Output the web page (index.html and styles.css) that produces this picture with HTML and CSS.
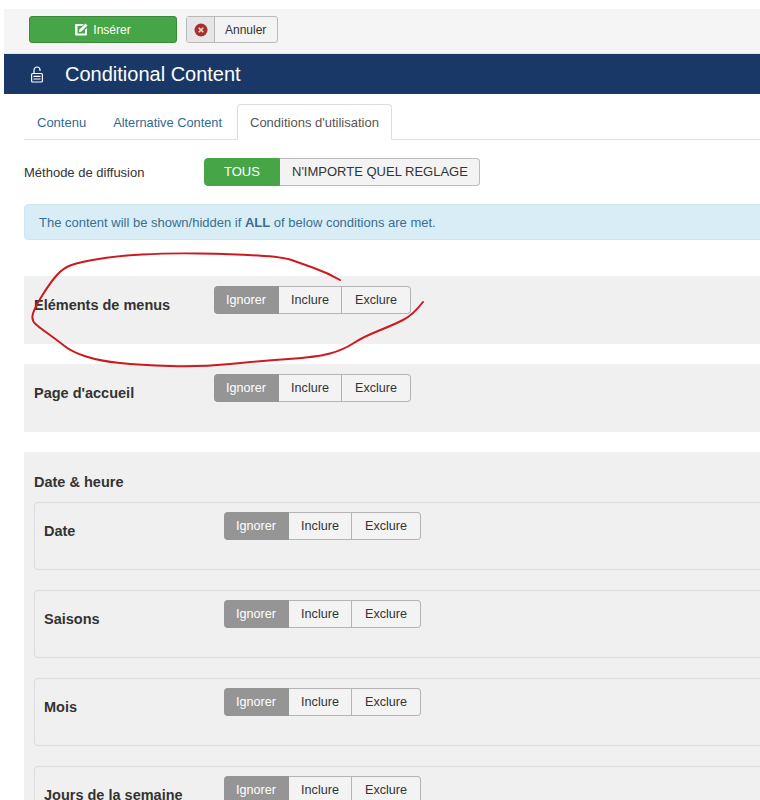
FILE: index.html
```html
<!DOCTYPE html>
<html lang="fr">
<head>
    <meta charset="UTF-8">
    <meta name="viewport" content="width=device-width, initial-scale=1.0">
    <title>Conditional Content</title>
    <link rel="stylesheet" href="styles.css">
</head>
<body>
    <div class="page">
        <div class="toolbar">
            <a href="#" class="btn-insert">
                <svg class="icon-edit" width="13" height="13" viewBox="0 0 13 13">
                    <path d="M1.5 1h7.5l-2 2h-4.500v7.500h7.500v-3.500l2-2v6.200a1.300 1.300 0 0 1-1.300 1.300h-9.400a1.300 1.300 0 0 1-1.300-1.300v-9.400a1.300 1.300 0 0 1 1.500-0.800z" fill="#fff"/>
                    <path d="M10.5 0.5l2 2-6 6-2.700 0.700 0.700-2.700z" fill="#fff"/>
                </svg>
                Insérer
            </a>
            <a href="#" class="btn-cancel">
                <span class="cancel-icon">
                    <svg width="14" height="14" viewBox="0 0 14 14">
                        <circle cx="7" cy="7" r="6.5" fill="#a5312c"/>
                        <path d="M4.7 4.7l4.600 4.600M9.300 4.700l-4.600 4.600" stroke="#f0d4d2" stroke-width="1.6"/>
                    </svg>
                </span>
                <span class="cancel-label">Annuler</span>
            </a>
        </div>

        <header class="title-bar">
            <svg class="icon-lock" width="12" height="17" viewBox="0 0 12 17" fill="none" stroke="#fff" stroke-width="1.2">
                <path d="M3 7.5v-3.500a3 3 0 0 1 6 0v1"/>
                <rect x="0.6" y="7.5" width="10.8" height="8.5" rx="1"/>
                <path d="M2.5 10.3h7M2.500 13h7"/>
            </svg>
            <h1>Conditional Content</h1>
        </header>

        <main class="content">
            <ul class="tabs">
                <li><a href="#">Contenu</a></li>
                <li class="alt"><a href="#">Alternative Content</a></li>
                <li class="active"><a href="#">Conditions d'utilisation</a></li>
            </ul>

            <div class="method-row">
                <label class="method-label">Méthode de diffusion</label>
                <div class="method-group">
                    <span class="method-on">TOUS</span>
                    <span class="method-off">N'IMPORTE QUEL REGLAGE</span>
                </div>
            </div>

            <div class="alert">The content will be shown/hidden if <strong>ALL</strong> of below conditions are met.</div>

            <section class="panel">
                <div class="cond-label">Eléments de menus</div>
                <div class="btn-group">
                    <span class="on">Ignorer</span><span class="inc">Inclure</span><span class="exc">Exclure</span>
                </div>
            </section>

            <section class="panel">
                <div class="cond-label">Page d'accueil</div>
                <div class="btn-group">
                    <span class="on">Ignorer</span><span class="inc">Inclure</span><span class="exc">Exclure</span>
                </div>
            </section>

            <section class="group">
                <h2>Date &amp; heure</h2>

                <div class="sub-panel">
                    <div class="cond-label">Date</div>
                    <div class="btn-group">
                        <span class="on">Ignorer</span><span class="inc">Inclure</span><span class="exc">Exclure</span>
                    </div>
                </div>

                <div class="sub-panel">
                    <div class="cond-label">Saisons</div>
                    <div class="btn-group">
                        <span class="on">Ignorer</span><span class="inc">Inclure</span><span class="exc">Exclure</span>
                    </div>
                </div>

                <div class="sub-panel">
                    <div class="cond-label">Mois</div>
                    <div class="btn-group">
                        <span class="on">Ignorer</span><span class="inc">Inclure</span><span class="exc">Exclure</span>
                    </div>
                </div>

                <div class="sub-panel">
                    <div class="cond-label">Jours de la semaine</div>
                    <div class="btn-group">
                        <span class="on">Ignorer</span><span class="inc">Inclure</span><span class="exc">Exclure</span>
                    </div>
                </div>
            </section>
        </main>

        <!-- hand drawn circle on top of the screenshot -->
        <svg class="scribble" width="760" height="800" viewBox="0 0 760 800" fill="none">
            <path d="M340 280Q328 273 314 268Q300 263 291.5 260Q283 257 258 255.5Q233 254 200 253.5Q167 253 142 254.5Q117 256 98.5 259Q80 262 71.5 265Q63 268 56.5 275.5Q50 283 42.5 295Q35 307 33 313.5Q31 320 35.5 324Q40 328 48.5 334Q57 340 64.5 346Q72 352 86 356.5Q100 361 120 363Q140 365 170 366Q200 367 230 364Q260 361 288.5 359Q317 357 330 353.5Q343 350 353 343.5Q363 337 378 331Q393 325 403 320Q413 315 423 302" stroke="#cc1a1f" stroke-width="2" stroke-linecap="round"/>
        </svg>
    </div>
</body>
</html>
```

FILE: styles.css
```css
* {
    margin: 0;
    padding: 0;
    box-sizing: border-box;
}

html, body {
    height: 800px;
    overflow: hidden;
    background: #fff;
}

body {
    font-family: 'Liberation Sans', Arial, sans-serif;
    font-size: 13px;
    color: #333;
}

.page {
    position: relative;
    height: 800px;
    padding: 9px 0 0 4px;
    overflow: hidden;
}

.toolbar {
    display: flex;
    align-items: center;
    gap: 9px;
    height: 45px;
    padding: 0 0 3px 25px;
    font-size: 12px;
    background: #f5f5f5;
    border-bottom: 1px solid #e6e6e6;
}

.btn-insert {
    display: flex;
    align-items: center;
    justify-content: center;
    gap: 5px;
    width: 148px;
    height: 27px;
    background: #46a546;
    border: 1px solid #3b8a3b;
    border-radius: 3px;
    color: #fff;
    text-decoration: none;
}

.btn-cancel {
    display: flex;
    width: 92px;
    height: 27px;
    border: 1px solid #b9b9b9;
    border-radius: 3px;
    background: #f3f3f3;
    color: #333;
    text-decoration: none;
}

.cancel-icon {
    display: flex;
    align-items: center;
    justify-content: center;
    width: 28px;
    background: #e6e6e6;
    border-right: 1px solid #b9b9b9;
}

.cancel-label {
    display: flex;
    align-items: center;
    padding: 0 10px;
}

.title-bar {
    display: flex;
    align-items: center;
    gap: 22px;
    height: 40px;
    padding-left: 27px;
    background: #1a3867;
    color: #fff;
}

.title-bar h1 {
    font-size: 20px;
    font-weight: normal;
}

.content {
    width: 800px;
    padding: 10px 0 0 20px;
}

.tabs {
    display: flex;
    list-style: none;
    height: 36px;
    border-bottom: 1px solid #ddd;
}

.tabs li a {
    display: block;
    height: 36px;
    padding: 0 13px;
    line-height: 37px;
    color: #2d6a96;
    text-decoration: none;
}

.tabs li.alt a {
    padding: 0 15px 0 14px;
    font-size: 12.8px;
}

.tabs li.active a {
    height: 36px;
    padding: 0 12px;
    color: #555;
    background: #fff;
    border: 1px solid #ddd;
    border-bottom-color: #fff;
    border-radius: 4px 4px 0 0;
    line-height: 35px;
}

.method-row {
    display: flex;
    align-items: center;
    margin-top: 18px;
}

.method-label {
    width: 180px;
}

.method-group {
    display: flex;
    height: 28px;
    line-height: 26px;
}

.method-on {
    width: 76px;
    text-align: center;
    color: #fff;
    background: #46a546;
    border: 1px solid #46a546;
    border-radius: 4px 0 0 4px;
}

.method-off {
    padding: 0 11px 0 12px;
    background: #f3f3f3;
    border: 1px solid #bbb;
    border-left: 0;
    border-radius: 0 4px 4px 0;
}

.alert {
    height: 36px;
    margin-top: 18px;
    padding-left: 14px;
    line-height: 35px;
    color: #3a6f8f;
    background: #d9edf7;
    border: 1px solid #cde6f2;
    border-radius: 4px 0 0 4px;
}

.panel {
    display: flex;
    height: 68px;
    margin-top: 20px;
    padding: 10px 10px;
    background: #f0f0f0;
}

.panel:first-of-type {
    margin-top: 36px;
}

.cond-label {
    width: 180px;
    padding-top: 11px;
    font-size: 14.5px;
    font-weight: bold;
}

.btn-group {
    display: flex;
    height: 28px;
    font-size: 12.6px;
    line-height: 27px;
}

.btn-group span {
    text-align: center;
    background: #f3f3f3;
    border: 1px solid #b4b4b4;
    border-left: 0;
}

.btn-group .on {
    width: 65px;
    color: #fff;
    background: #959595;
    border-color: #959595;
    border-radius: 4px 0 0 4px;
}

.btn-group .inc {
    width: 63px;
    border-right: 1px solid #b4b4b4;
}

.btn-group .exc {
    width: 69px;
    border-radius: 0 4px 4px 0;
}

.group {
    margin-top: 20px;
    padding: 20px 10px 0;
    height: 400px;
    background: #f0f0f0;
}

.group h2 {
    height: 30px;
    font-size: 14.5px;
    line-height: 20px;
}

.sub-panel {
    display: flex;
    height: 68px;
    margin-bottom: 20px;
    padding: 9px 9px;
    border: 1px solid #ddd;
    border-radius: 4px 0 0 4px;
}

.scribble {
    position: absolute;
    top: 0;
    left: 0;
    pointer-events: none;
}
```
